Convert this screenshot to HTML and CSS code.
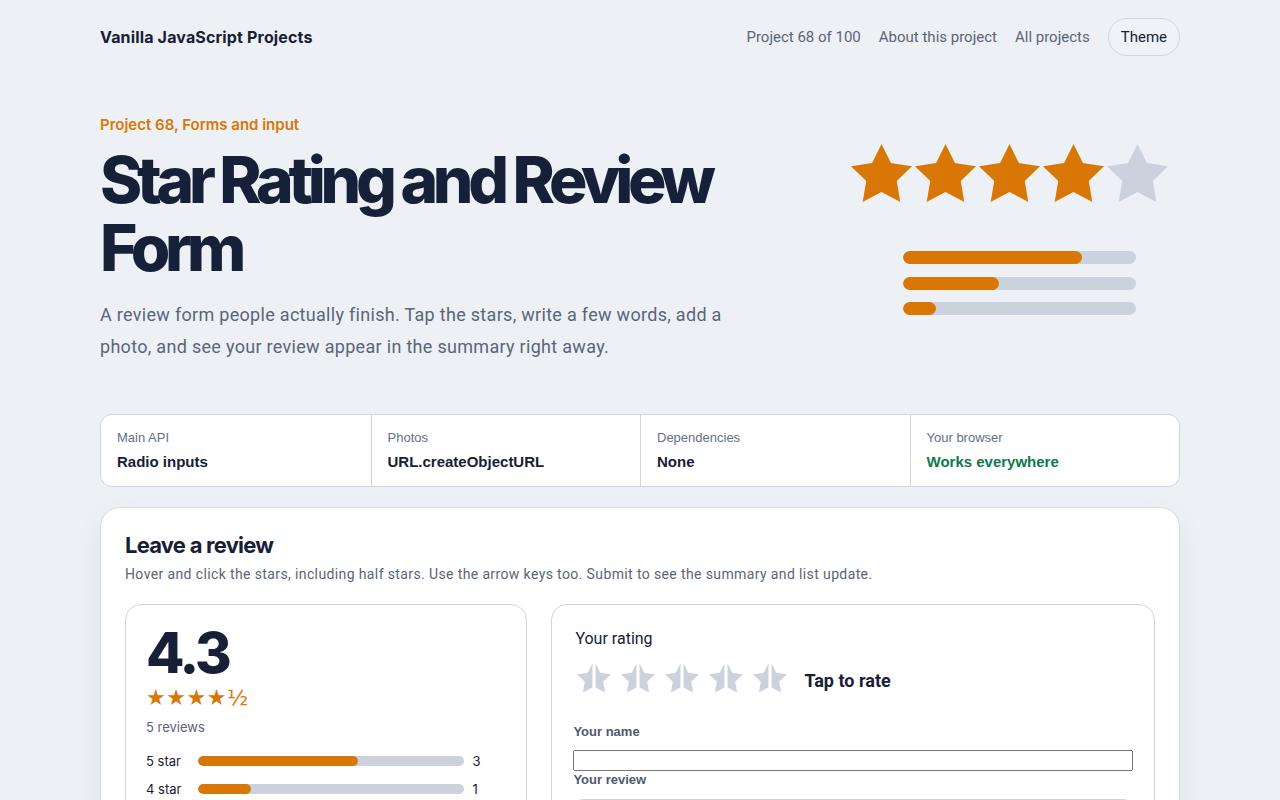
FILE: index.html
```html
<!DOCTYPE html>
<html lang="en">
<head>
    <meta charset="UTF-8">
    <meta name="viewport" content="width=device-width, initial-scale=1.0">
    <title>Star Rating and Review Form</title>
    <link rel="stylesheet" href="styles.css">
</head>
<body>
    <header class="site-header">
        <a class="brand" href="#">Vanilla JavaScript Projects</a>
        <nav class="site-nav">
            <a href="#">Project 68 of 100</a>
            <a href="#">About this project</a>
            <a href="#">All projects</a>
            <button class="theme-btn" type="button">Theme</button>
        </nav>
    </header>

    <main class="page">
        <section class="hero">
            <div class="hero-text">
                <p class="eyebrow">Project 68, Forms and input</p>
                <h1>Star Rating and Review Form</h1>
                <p class="lead">A review form people actually finish. Tap the stars, write a few words, add a photo, and see your review appear in the summary right away.</p>
            </div>
            <div class="hero-art" aria-hidden="true">
                <div class="art-stars">
                    <svg class="star on" viewBox="2 2 20 19.02"><polygon points="12,2 15.09,8.26 22,9.27 17,14.14 18.18,21.02 12,17.77 5.82,21.02 7,14.14 2,9.27 8.91,8.26"/></svg>
                    <svg class="star on" viewBox="2 2 20 19.02"><polygon points="12,2 15.09,8.26 22,9.27 17,14.14 18.18,21.02 12,17.77 5.82,21.02 7,14.14 2,9.27 8.91,8.26"/></svg>
                    <svg class="star on" viewBox="2 2 20 19.02"><polygon points="12,2 15.09,8.26 22,9.27 17,14.14 18.18,21.02 12,17.77 5.82,21.02 7,14.14 2,9.27 8.91,8.26"/></svg>
                    <svg class="star on" viewBox="2 2 20 19.02"><polygon points="12,2 15.09,8.26 22,9.27 17,14.14 18.18,21.02 12,17.77 5.82,21.02 7,14.14 2,9.27 8.91,8.26"/></svg>
                    <svg class="star" viewBox="2 2 20 19.02"><polygon points="12,2 15.09,8.26 22,9.27 17,14.14 18.18,21.02 12,17.77 5.82,21.02 7,14.14 2,9.27 8.91,8.26"/></svg>
                </div>
                <div class="art-bars">
                    <span class="track"><span class="fill" style="width: 77%"></span></span>
                    <span class="track"><span class="fill" style="width: 41%"></span></span>
                    <span class="track"><span class="fill" style="width: 14%"></span></span>
                </div>
            </div>
        </section>

        <dl class="facts">
            <div class="fact">
                <dt>Main API</dt>
                <dd>Radio inputs</dd>
            </div>
            <div class="fact">
                <dt>Photos</dt>
                <dd>URL.createObjectURL</dd>
            </div>
            <div class="fact">
                <dt>Dependencies</dt>
                <dd>None</dd>
            </div>
            <div class="fact">
                <dt>Your browser</dt>
                <dd class="ok">Works everywhere</dd>
            </div>
        </dl>

        <section class="review-card">
            <h2>Leave a review</h2>
            <p class="hint">Hover and click the stars, including half stars. Use the arrow keys too. Submit to see the summary and list update.</p>

            <div class="review-grid">
                <div class="panel summary">
                    <div class="avg">4.3</div>
                    <div class="avg-stars">★★★★½</div>
                    <div class="count">5 reviews</div>
                    <div class="dist">
                        <span>5 star</span><span class="track"><span class="fill" style="width: 60%"></span></span><span>3</span>
                        <span>4 star</span><span class="track"><span class="fill" style="width: 20%"></span></span><span>1</span>
                        <span>3 star</span><span class="track"><span class="fill" style="width: 20%"></span></span><span>1</span>
                        <span>2 star</span><span class="track"><span class="fill" style="width: 0%"></span></span><span>0</span>
                        <span>1 star</span><span class="track"><span class="fill" style="width: 0%"></span></span><span>0</span>
                    </div>
                </div>

                <form class="panel review-form">
                    <p class="rating-label">Your rating</p>
                    <div class="rating-row">
                        <div class="picker" role="radiogroup">
                            <svg class="half-star" viewBox="0 0 26 22"><polygon points="12,2 12,17.77 5.82,21.02 7,14.14 2,9.27 8.91,8.26"/><polygon transform="translate(2 0)" points="12,2 15.09,8.26 22,9.27 17,14.14 18.18,21.02 12,17.77"/></svg>
                            <svg class="half-star" viewBox="0 0 26 22"><polygon points="12,2 12,17.77 5.82,21.02 7,14.14 2,9.27 8.91,8.26"/><polygon transform="translate(2 0)" points="12,2 15.09,8.26 22,9.27 17,14.14 18.18,21.02 12,17.77"/></svg>
                            <svg class="half-star" viewBox="0 0 26 22"><polygon points="12,2 12,17.77 5.82,21.02 7,14.14 2,9.27 8.91,8.26"/><polygon transform="translate(2 0)" points="12,2 15.09,8.26 22,9.27 17,14.14 18.18,21.02 12,17.77"/></svg>
                            <svg class="half-star" viewBox="0 0 26 22"><polygon points="12,2 12,17.77 5.82,21.02 7,14.14 2,9.27 8.91,8.26"/><polygon transform="translate(2 0)" points="12,2 15.09,8.26 22,9.27 17,14.14 18.18,21.02 12,17.77"/></svg>
                            <svg class="half-star" viewBox="0 0 26 22"><polygon points="12,2 12,17.77 5.82,21.02 7,14.14 2,9.27 8.91,8.26"/><polygon transform="translate(2 0)" points="12,2 15.09,8.26 22,9.27 17,14.14 18.18,21.02 12,17.77"/></svg>
                        </div>
                        <span class="rating-text">Tap to rate</span>
                    </div>

                    <label class="field-label" for="name">Your name</label>
                    <input id="name" type="text">
                    <label class="field-label" for="review">Your review</label>
                    <textarea id="review" rows="4"></textarea>
                </form>
            </div>
        </section>
    </main>
</body>
</html>
```

FILE: styles.css
```css
* {
    box-sizing: border-box;
}

body {
    margin: 0;
    background-color: #edf1f5;
    color: #172036;
    font-family: Inter, "Noto Sans", sans-serif;
}

a {
    color: inherit;
    text-decoration: none;
}

/* top bar */
.site-header {
    width: 1080px;
    margin: 0 auto;
    padding-top: 18px;
    display: flex;
    justify-content: space-between;
    align-items: center;
}

.brand {
    font-size: 16px;
    font-weight: 700;
    letter-spacing: 0.01em;
}

.site-nav {
    display: flex;
    align-items: center;
    gap: 18px;
    font-family: Roboto, sans-serif;
    font-size: 15px;
    color: #5b6475;
}

.theme-btn {
    height: 38px;
    padding: 0 12px;
    border: 1px solid #cfd6e0;
    border-radius: 19px;
    background: #eff2f6;
    color: #172036;
    font-family: Roboto, sans-serif;
    font-size: 15px;
}

.page {
    width: 1080px;
    margin: 0 auto;
}

/* hero */
.hero {
    display: flex;
    justify-content: space-between;
    padding-top: 59px;
}

.eyebrow {
    margin: 0;
    font-size: 15px;
    line-height: 20px;
    font-weight: 600;
    color: #d97706;
}

h1 {
    margin: 11px 0 0;
    font-size: 64px;
    line-height: 68px;
    font-weight: 800;
    letter-spacing: -0.082em;
    color: #172039;
}

.lead {
    margin: 17px 0 0;
    max-width: 640px;
    font-family: Roboto, sans-serif;
    font-size: 18px;
    line-height: 32px;
    letter-spacing: 0.3px;
    color: #5b6577;
}

.hero-art {
    flex-shrink: 0;
    width: 317px;
    margin-right: 12px;
    padding-top: 29px;
}

.art-stars {
    display: flex;
    gap: 3px;
}

.star {
    width: 61px;
    height: 58px;
    fill: #cbd2dd;
}

.star.on {
    fill: #d97706;
}

.art-bars {
    display: flex;
    flex-direction: column;
    gap: 12.5px;
    width: 233px;
    margin: 49px 0 0 52px;
}

.track {
    display: block;
    height: 13px;
    border-radius: 7px;
    background: #cbd2dd;
    overflow: hidden;
}

.fill {
    display: block;
    height: 100%;
    border-radius: inherit;
    background: #d97706;
}

/* quick facts */
.facts {
    display: grid;
    grid-template-columns: repeat(4, 1fr);
    margin: 51px 0 0;
    background: #fff;
    border: 1px solid #cdd5e0;
    border-radius: 12px;
    font-family: "Liberation Sans", Arial, sans-serif;
}

.fact {
    padding: 15px 16px 14px;
    border-left: 1px solid #cdd5e0;
}

.fact:first-child {
    border-left: 0;
}

.fact dt {
    font-size: 13px;
    line-height: 16px;
    color: #64708a;
}

.fact dd {
    margin: 6px 0 0;
    font-size: 15px;
    line-height: 20px;
    font-weight: 700;
}

.fact dd.ok {
    color: #0d7a4b;
}

/* review card */
.review-card {
    margin-top: 20px;
    padding: 23px 24px 24px;
    background: #fff;
    border: 1px solid #d5dce6;
    border-radius: 20px;
    box-shadow: 0 12px 30px rgba(23, 32, 54, 0.06);
}

.review-card h2 {
    margin: 0;
    font-size: 22px;
    line-height: 28px;
    font-weight: 700;
    letter-spacing: -0.035em;
}

.hint {
    margin: 5px 0 0;
    font-family: Roboto, sans-serif;
    font-size: 14px;
    line-height: 20px;
    letter-spacing: 0.38px;
    color: #5b6577;
}

.review-grid {
    display: grid;
    grid-template-columns: 2fr 3fr;
    gap: 24px;
    margin-top: 20px;
}

.panel {
    border: 1px solid #cdd5e0;
    border-radius: 16px;
}

.summary {
    padding: 20px 20px 20px;
}

.avg {
    font-size: 56px;
    line-height: 56px;
    font-weight: 800;
    letter-spacing: -0.055em;
}

.avg-stars {
    margin-top: 5px;
    font-family: "DejaVu Sans", sans-serif;
    font-size: 22px;
    line-height: 24px;
    color: #d97706;
    letter-spacing: 0.5px;
}

.count {
    margin-top: 8px;
    font-size: 13px;
    line-height: 18px;
    color: #5b6577;
}

.dist {
    display: grid;
    grid-template-columns: 44px 1fr 34px;
    column-gap: 8px;
    align-items: center;
    margin-top: 11px;
    font-size: 13px;
    line-height: 28px;
}

.dist .track {
    height: 10px;
    border-radius: 5px;
}

/* the form */
.review-form {
    padding: 23px 21px 24px;
}

.rating-label {
    margin: 0 0 0 2px;
    font-family: Roboto, sans-serif;
    font-size: 16px;
    line-height: 22px;
}

.rating-row {
    display: flex;
    align-items: center;
    gap: 14px;
    margin-top: 10px;
}

.picker {
    display: flex;
    gap: 4px;
    padding-left: 1px;
}

.half-star {
    width: 40px;
    height: 34px;
    fill: #cbd2dd;
}

.rating-text {
    margin-top: 6px;
    font-family: Roboto, sans-serif;
    font-size: 18px;
    font-weight: 700;
}

.field-label {
    display: block;
    font-family: "Liberation Sans", Arial, sans-serif;
    font-size: 13px;
    line-height: 18px;
    font-weight: 700;
    color: #4f596b;
}

.rating-row + .field-label {
    margin-top: 29px;
}

#name {
    display: block;
    width: 100%;
    height: 21px;
    margin-top: 9px;
}

#review {
    display: block;
    width: 100%;
    margin-top: 10px;
    border: 1px solid #cdd5e0;
    border-radius: 10px;
}
```
